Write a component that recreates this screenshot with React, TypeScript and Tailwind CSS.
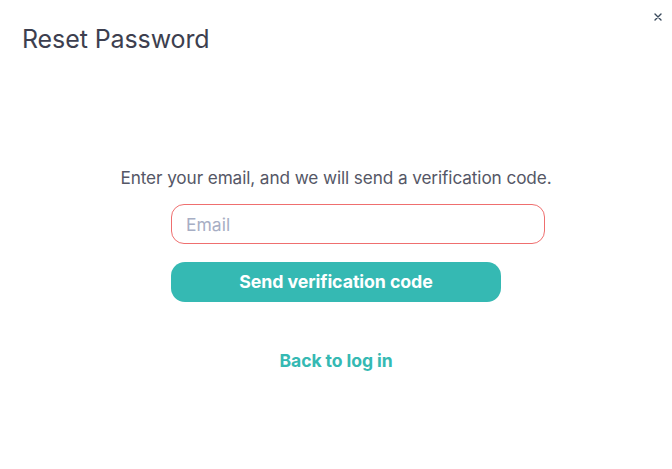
export default function App() {
  return (
    <div
      className="relative w-[672px] h-[469px] bg-white overflow-hidden"
      style={{ fontFamily: "Inter, 'Noto Sans', sans-serif" }}
    >
      {/* close button */}
      <button className="absolute top-[12px] right-[9px] w-[10px] h-[10px] flex items-center justify-center text-[#3a4a5c]">
        <svg width="8" height="8" viewBox="0 0 8 8" fill="none" stroke="currentColor" strokeWidth="1.4" strokeLinecap="round">
          <path d="M1 1L7 7M7 1L1 7" />
        </svg>
      </button>

      <h1 className="pl-[22px] pt-[24px] text-[25px] leading-[30px] font-normal text-[#3d3f4f] tracking-[-0.1px]">
        Reset Password
      </h1>

      <div className="flex flex-col items-center pt-[114px]">
        <p className="text-[17.2px] leading-[20px] text-[#555766] tracking-[-0.1px]">
          Enter your email, and we will send a verification code.
        </p>

        <div className="w-[330px] mt-[16px]">
          <input
            placeholder="Email"
            className="w-[374px] h-[40px] rounded-[13px] border border-[#ef6f6f] px-[14px] text-[17.5px] text-[#333] placeholder:text-[#a7aec4] outline-none"
          />
          <button className="mt-[18px] w-[330px] h-[40px] rounded-[14px] bg-[#35b9b3] text-white text-[17.8px] font-bold tracking-[-0.1px]">
            Send verification code
          </button>
        </div>

        <a className="mt-[46px] text-[17.6px] font-bold text-[#35b9b3] tracking-[-0.1px] cursor-pointer">
          Back to log in
        </a>
      </div>
    </div>
  );
}
